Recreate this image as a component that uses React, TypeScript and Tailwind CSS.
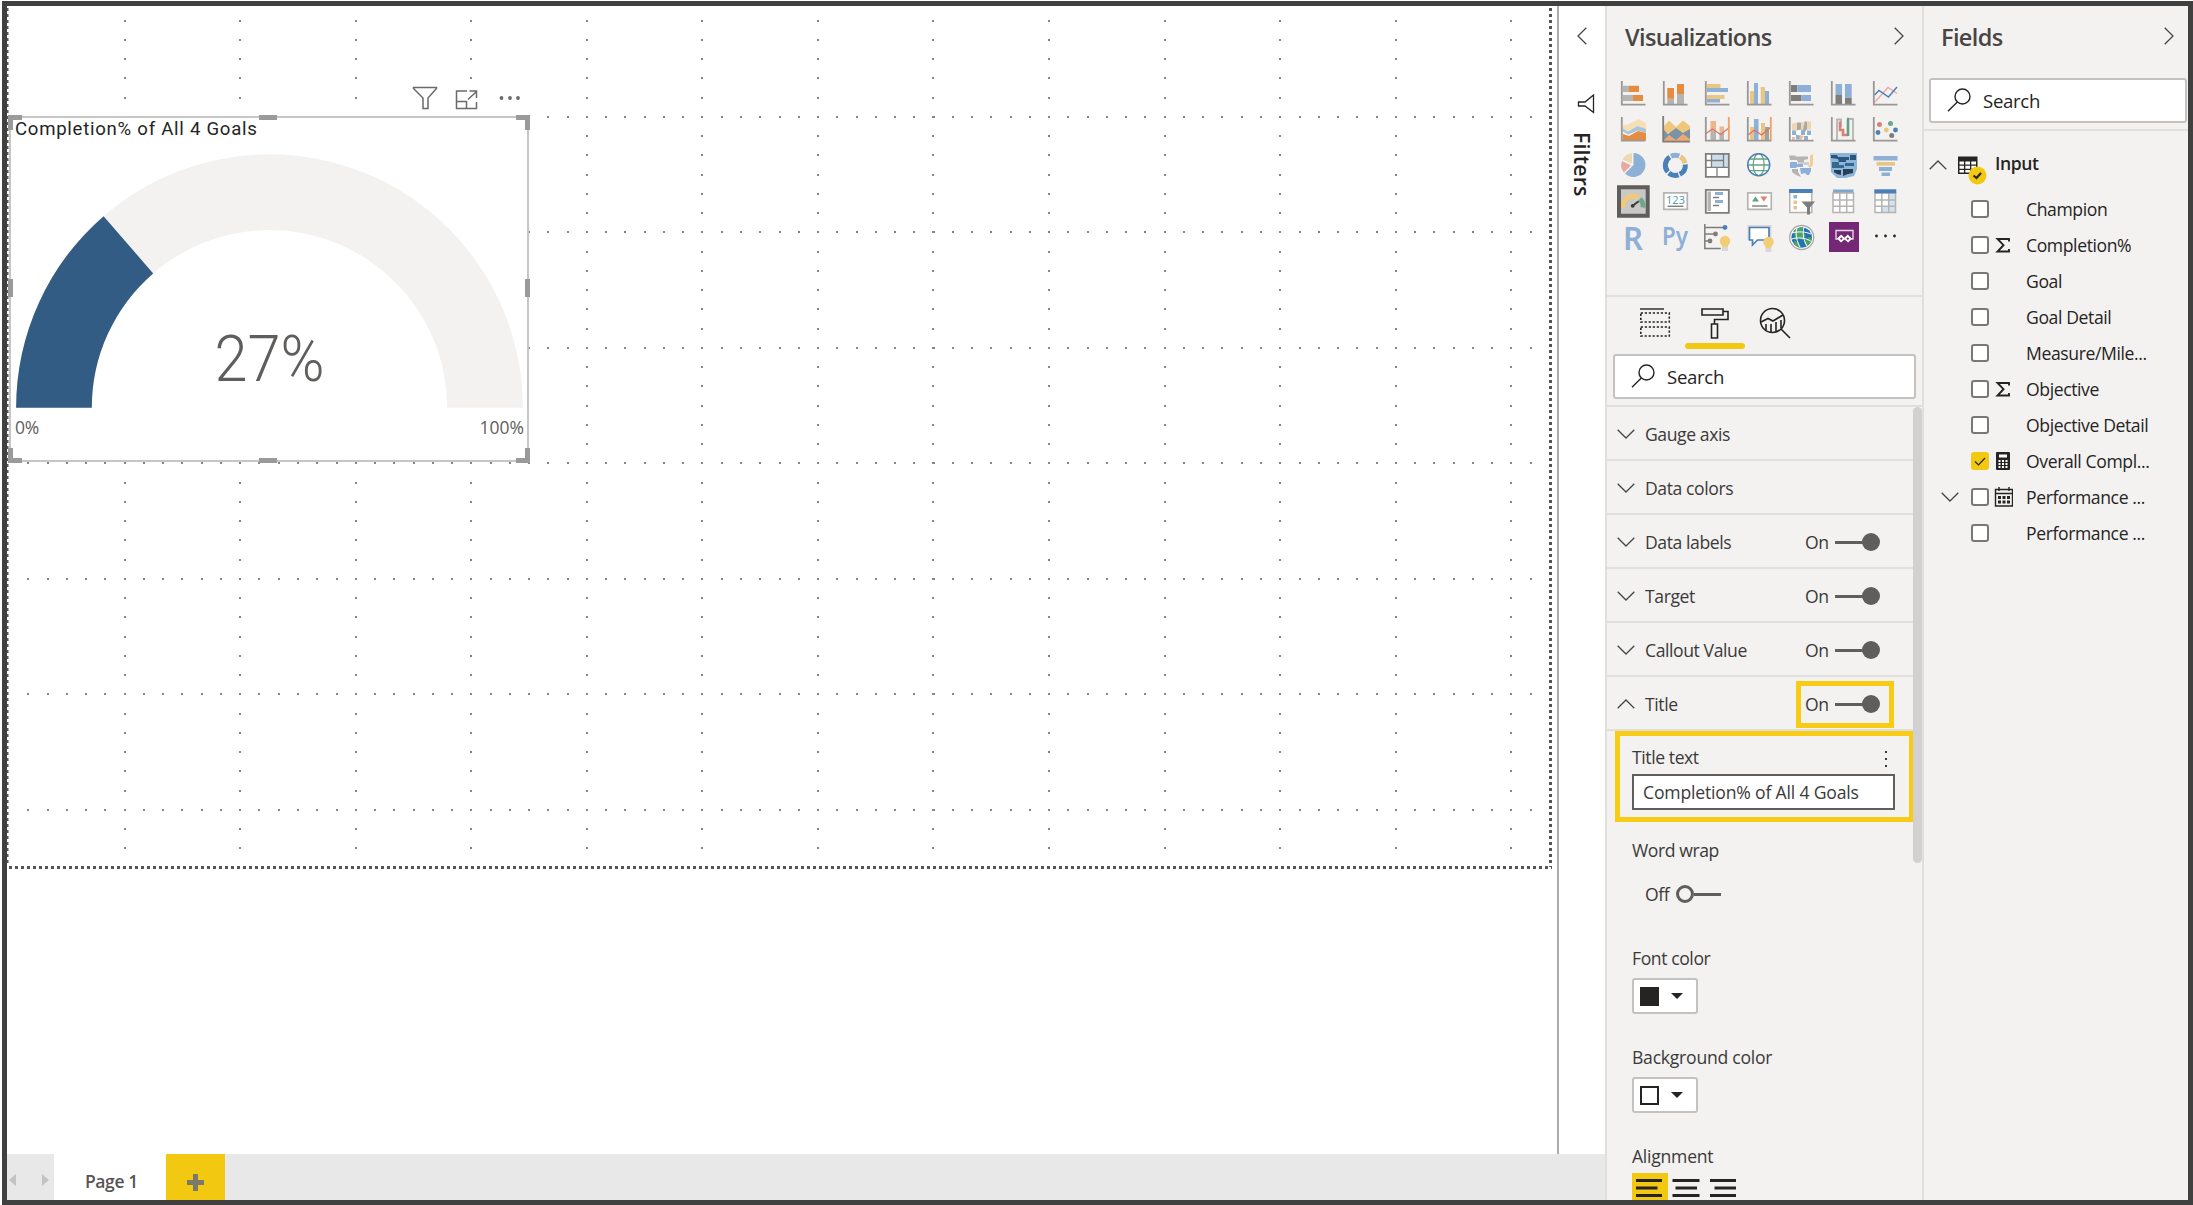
import type { ReactNode } from 'react';

const AXIS = '#999896';
const BLUE = '#8fb0d6';
const DEEP = '#4a80b8';
const SAND = '#e8c684';
const ORANGE = '#e58c41';
const GREY = '#b5b4b2';
const DARK = '#7e7d7b';

const Axis = () => <path d="M9.8 6V29.6H33.5" fill="none" stroke={AXIS} strokeWidth="1.8" />;

const Bulb = ({ x, y }: { x: number; y: number }) => (
  <g transform={`translate(${x} ${y})`}>
    <path d="M-3 3h6v7h-6z" fill="#d9d8d6" />
    <circle r="5.2" fill="#f2cd74" />
    <path d="M-2.6 3h5.2v3h-5.2z" fill="#f2cd74" />
  </g>
);

// Every icon is drawn in a 42 x 36 cell
const visuals: { name: string; art: ReactNode }[] = [
  {
    name: 'Stacked bar chart',
    art: <>
      <path d="M11 10.7h6V17h-6zM11 20h10v6H11z" fill={GREY} />
      <path d="M17 10.7h10V17H17zM21 20h10v6H21z" fill={ORANGE} />
      <Axis />
    </>,
  },
  {
    name: 'Stacked column chart',
    art: <>
      <path d="M13.3 23.7H20V29h-6.7zM23 19h7v10h-7z" fill={GREY} />
      <path d="M13.3 13H20v10.7h-6.7zM23 9h7v10h-7z" fill={ORANGE} />
      <Axis />
    </>,
  },
  {
    name: 'Clustered bar chart',
    art: <>
      <path d="M11 9h13.5v4H11zM11 20h17.5v4H11z" fill={SAND} />
      <path d="M11 13h21v4H11zM11 24h13v3.5H11z" fill={BLUE} />
      <Axis />
    </>,
  },
  {
    name: 'Clustered column chart',
    art: <>
      <path d="M12 16h4v13h-4zM22.7 12H27v17h-4.3z" fill={SAND} />
      <path d="M16 8h4v21h-4zM27 16h4v13h-4z" fill={BLUE} />
      <Axis />
    </>,
  },
  {
    name: '100% Stacked bar chart',
    art: <>
      <path d="M11 10h6.3v7H11zM11 20h10.5v6H11z" fill={DARK} />
      <path d="M17.3 10H31v7H17.3zM21.5 20H31v6h-9.5z" fill={BLUE} />
      <Axis />
    </>,
  },
  {
    name: '100% Stacked column chart',
    art: <>
      <path d="M13.5 9H20v11h-6.5zM23 9h6.7v13.7H23z" fill={BLUE} />
      <path d="M13.5 20H20v9h-6.5zM23 22.7h6.7V29H23z" fill={DARK} />
      <Axis />
    </>,
  },
  {
    name: 'Line chart',
    art: <>
      <path d="M11 27 24 12.5l9 6" fill="none" stroke="#f0a9a4" strokeWidth="1.4" />
      <path d="M10.5 20l4.5-4.5 9.5 6.5L33 12" fill="none" stroke={DEEP} strokeWidth="1.5" />
      <Axis />
    </>,
  },
  {
    name: 'Area chart',
    art: <>
      <path d="M11 14l5-.5L26.5 8l7.5 4v7l-8-4-10 5-5-2z" fill="#f6dfb8" />
      <path d="M11 17.5l5 3L25.5 15l8.500 3v4l-8-2.500-10 4-5-3z" fill="#a9c4d4" />
      <path d="M11 23l6 2 9-5 8 2v7.500H11z" fill={ORANGE} />
      <Axis />
    </>,
  },
  {
    name: 'Stacked area chart',
    art: <>
      <path d="M9 16l6-6.500 7 6.500 7-6.500 7 5.500V22H9z" fill="#f0c67c" />
      <path d="M9 18l5 5 8-6 7 5 7-4v12H9z" fill="#7a93a6" />
      <path d="M9 30l6-6 7 5 7-6 7 5v2z" fill="#eda973" />
      <path d="M9.200 5v25.700H36" fill="none" stroke={DARK} strokeWidth="1.8" />
    </>,
  },
  {
    name: 'Line and stacked column chart',
    art: <>
      <path d="M14.500 10H20v10h-5.500zM23.500 15.500H28v6h-4.500z" fill="#edb78b" />
      <path d="M14.500 20H20v9h-5.500zM23.500 21.500H28V29h-4.500z" fill={GREY} />
      <path d="M10 22.500l6.500-4.500 8 5.500 9-7" fill="none" stroke="#dd6f5f" strokeWidth="1.2" />
      <path d="M32.800 6v23" stroke="#eda16b" strokeWidth="1.8" />
      <Axis />
    </>,
  },
  {
    name: 'Line and clustered column chart',
    art: <>
      <path d="M12 16h4v13h-4zM23 12h4v17h-4z" fill={SAND} />
      <path d="M16 8h4.500v21H16z" fill={BLUE} />
      <path d="M27 16h4v13h-4z" fill={DARK} opacity=".7" />
      <path d="M10 24l6.500-5 7 5 9.500-8" fill="none" stroke="#dd6f5f" strokeWidth="1.2" />
      <path d="M32.800 6v23" stroke="#eda16b" strokeWidth="1.8" />
      <Axis />
    </>,
  },
  {
    name: 'Ribbon chart',
    art: <>
      <path d="M11 19h20v10H11z" fill="#fff" />
      <path d="M12 12.500l5-1v8h-5zM21 11.500l5-1.500v8l-5 1zM27 10.500h4v8h-4z" fill="#edd6b2" />
      <path d="M17 11.500l4 0v7l-4 1zM25 10.500l2 0v8l-4 5v-5z" fill="#aaa9a7" />
      <path d="M12 19.500h4v4.500h-4zM16 23.500l4 1v4h-4zM21 18.500l4 1v4.500h-4zM27 19.500h4V24h-4zM24 25h4v4h-4z" fill={BLUE} />
      <path d="M12 26h3v3h-3zM20 24l4 1-3 4h-2z" fill="#e9bf9a" />
      <Axis />
    </>,
  },
  {
    name: 'Waterfall chart',
    art: <>
      <path d="M15 29.500V8.500h4V16" fill="none" stroke={GREY} strokeWidth="1.8" />
      <path d="M18 10.500v8.500h3v5h5" fill="none" stroke="#dc7f75" strokeWidth="2.6" />
      <path d="M26 25V8h-1" fill="none" stroke="#62a086" strokeWidth="2.6" />
      <path d="M27 8h4v21.500" fill="none" stroke={GREY} strokeWidth="1.8" />
      <Axis />
    </>,
  },
  {
    name: 'Scatter chart',
    art: <>
      <circle cx="15.5" cy="13.5" r="2.5" fill="#dc7f75" />
      <circle cx="26.5" cy="12.5" r="2.5" fill="#6ba58c" />
      <circle cx="14" cy="21.5" r="2.4" fill={DEEP} />
      <circle cx="22.3" cy="19" r="2.4" fill={SAND} />
      <circle cx="31.5" cy="19" r="2.4" fill={DEEP} />
      <circle cx="27.7" cy="24.5" r="2.5" fill={DARK} />
      <Axis />
    </>,
  },
  {
    name: 'Pie chart',
    art: <>
      <path d="M21.500 18V6a12 12 0 1 1-8.500 20.500z" fill={BLUE} />
      <path d="M20 16.500V6.200a12 12 0 0 0-9.500 6.300z" fill="#eed9b3" />
      <path d="M19 18.500l-9-4.500a11 11 0 0 0 2 11.500z" fill="#eaa9a0" />
    </>,
  },
  {
    name: 'Donut chart',
    art: (
      <g fill="none" strokeWidth="5" transform="translate(21.3 18.3)">
        <path d="M-4.300-9.100A10 10 0 0 1 3.900-9.200" stroke={BLUE} />
        <path d="M5-8.700A10 10 0 0 1 9.700-2" stroke={SAND} />
        <path d="M10-.8A10 10 0 0 1 4.500 9" stroke={DEEP} />
        <path d="M3.300 9.500A10 10 0 0 1-6.500 7.700" stroke={DEEP} />
        <path d="M-7.500 6.600A10 10 0 0 1-5.500-8.300" stroke={DEEP} />
      </g>
    ),
  },
  {
    name: 'Treemap',
    art: <>
      <path d="M9.800 6.800h23v23h-23z" fill="#fff" />
      <path d="M16 7h17v13H16z" fill="#cddcec" />
      <path d="M15.500 7v13M27.500 7v13M9.800 20.300h23M15.500 13.500h12M21 20.300v9.500M9.800 13.500h5.700" stroke={DARK} strokeWidth="1.3" fill="none" />
      <path d="M9.800 6.800h23v23h-23z" fill="none" stroke={DARK} strokeWidth="1.8" />
    </>,
  },
  {
    name: 'Map',
    art: <>
      <circle cx="20.7" cy="17.7" r="11" fill="#fff" />
      <path d="M12 12h17.500M10 18h21.500M12 23.700h17.500" stroke="#67a37f" strokeWidth="1.3" />
      <ellipse cx="20.7" cy="17.7" rx="5.5" ry="11" fill="none" stroke="#67a37f" strokeWidth="1.3" />
      <circle cx="20.7" cy="17.7" r="11" fill="none" stroke={DEEP} strokeWidth="1.5" />
    </>,
  },
  {
    name: 'Filled map',
    art: <>
      <path d="M9 8.500h6l1 1h12V12l-4 1v2h-6l-1-2H10z" fill={GREY} />
      <path d="M30 8.500l3-1.500v11l-3 3-2-2 2-2z" fill="#efcf95" />
      <path d="M10 15h7v2h6v3h-6l-1 1h-6z" fill={BLUE} />
      <path d="M18 15h11v3h-5v-1h-6z" fill="#cfcecc" />
      <path d="M12 22h6v3l3 5-5-2-4-3z" fill={GREY} />
      <path d="M20 21h11v3l-2 4h-2l-2-2-4 1z" fill={BLUE} />
    </>,
  },
  {
    name: 'Shape map',
    art: <>
      <path d="M8 6h27v16l-3 7-4 1-4 1h-9l-6-6z" fill="#8db5d9" />
      <path d="M9 8h6l1 2h11v3h-3v2h-7l-1-3-7-1zM28 8h6v5h-6z" fill="#2d567f" />
      <path d="M10 15h7v3h5v3H10zM23 16h9v3h-9z" fill="#35688f" />
      <path d="M12 23h7v5l-4-1-3-2zM21 22h10v4l-5 1-5 2z" fill="#283f59" />
    </>,
  },
  {
    name: 'Funnel',
    art: <>
      <path d="M9.500 9h24v4.500h-24zM15 20h13v4H15z" fill={BLUE} />
      <path d="M12.500 15h18.500v3.700H12.500z" fill={SAND} />
      <path d="M17.500 25.500H26V29h-8.500z" fill={BLUE} />
    </>,
  },
  {
    name: 'Gauge',
    art: <>
      <path d="M7 4.300h28.700v28.500H7z" fill="#c8c8c6" stroke="#5f5e5c" strokeWidth="4" />
      <path d="M11.500 24.500A9.800 9.800 0 0 1 26.300 14.600" fill="none" stroke="#f2c879" strokeWidth="4.8" />
      <path d="M28 16A9.800 9.800 0 0 1 30.900 24.500" fill="none" stroke="#6fa68b" strokeWidth="4.8" />
      <path d="M20.700 22.800l6-4.600" stroke="#3b3a39" strokeWidth="1.8" />
      <circle cx="20.7" cy="22.8" r="1.9" fill="#3b3a39" />
    </>,
  },
  {
    name: 'Card',
    art: <>
      <path d="M9.800 9.800h23.500v16.500H9.800z" fill="#fff" stroke={GREY} strokeWidth="1.7" />
      <text x="21.5" y="20.5" textAnchor="middle" fontSize="11" fill="#5f9db0" fontFamily="Noto Sans">123</text>
      <path d="M13.500 23.300h16" stroke={DARK} strokeWidth="1.4" />
    </>,
  },
  {
    name: 'Multi-row card',
    art: <>
      <path d="M9.800 6.800h23v23h-23z" fill="#fff" stroke={DARK} strokeWidth="1.8" />
      <path d="M11.500 8.500H15v19.500h-3.500z" fill={GREY} />
      <path d="M19 9h8v3h-8zM19 17h8v3h-8z" fill={BLUE} />
      <path d="M17 14.500h6M17 22.500h6" stroke={DARK} strokeWidth="1.3" />
    </>,
  },
  {
    name: 'KPI',
    art: <>
      <path d="M9.800 9.800h23.500v16.500H9.800z" fill="#fff" stroke={GREY} strokeWidth="1.7" />
      <path d="M14 18.500l3.500-5 3.500 5z" fill="#5ea286" />
      <path d="M22.300 13.500h7l-3.500 5z" fill="#dc7f75" />
      <path d="M14 23h15.500" stroke={DARK} strokeWidth="1.4" />
    </>,
  },
  {
    name: 'Slicer',
    art: <>
      <path d="M9.800 7h22v22.500h-22z" fill="#fff" stroke={GREY} strokeWidth="1.5" />
      <path d="M9 6h23.500v4H9z" fill={DEEP} />
      <path d="M13.500 12h3.500v3.500h-3.500z" fill={BLUE} />
      <path d="M13.500 17.500h3.500V21h-3.500z" fill={SAND} />
      <path d="M13.500 23h3.500v3.500h-3.500z" fill="#e9bf9a" />
      <path d="M21.500 18.500h13.500l-5 6v7h-3v-7z" fill={DARK} />
    </>,
  },
  {
    name: 'Table',
    art: <>
      <path d="M11 7h20.500v22.500H11z" fill="#fff" />
      <path d="M11 6.500h20.500V10H11z" fill="#7da6cc" />
      <path d="M11 17h20.500M11 23.300h20.500M17.800 10v19.500M24.700 10v19.500M11 10h20.500v19.500H11z" fill="none" stroke={GREY} strokeWidth="1.5" />
    </>,
  },
  {
    name: 'Matrix',
    art: <>
      <path d="M11 7h20.500v22.500H11z" fill="#fff" />
      <path d="M24.700 10h7v19.500h-14V23h7z" fill="#d3e2f1" />
      <path d="M11 17h20.500M11 23.300h20.500M17.800 10v19.500M24.700 10v19.500M11 10h20.500v19.500H11z" fill="none" stroke={GREY} strokeWidth="1.5" />
      <path d="M10.300 6.300h22v4h-22z" fill={DEEP} />
    </>,
  },
  {
    name: 'R script visual',
    art: <text x="11" y="30.5" fontSize="32" fontWeight="600" fill={BLUE} fontFamily="Noto Sans" textLength="20" lengthAdjust="spacingAndGlyphs">R</text>,
  },
  {
    name: 'Python visual',
    art: <text x="8" y="25.5" fontSize="25" fontWeight="600" fill={BLUE} fontFamily="Noto Sans" textLength="26" lengthAdjust="spacingAndGlyphs">Py</text>,
  },
  {
    name: 'Key influencers',
    art: <>
      <path d="M8.800 5v24.500h16M9 8.500h19.500M9 15h11M9 22h5" fill="none" stroke={DARK} strokeWidth="1.5" />
      <circle cx="29" cy="8.5" r="2.4" fill={DEEP} />
      <circle cx="19.5" cy="15" r="2.4" fill={DARK} />
      <circle cx="14" cy="22" r="2.4" fill={DARK} />
      <Bulb x={29} y={22} />
    </>,
  },
  {
    name: 'Q&A',
    art: <>
      <path d="M9.500 6h24v15h-24z" fill="#d9d8d6" />
      <path d="M11.500 8.500H31v12.500H19.500l-5 5v-5h-3z" fill="#fff" stroke={DEEP} strokeWidth="1.7" />
      <Bulb x={30.5} y={23} />
    </>,
  },
  {
    name: 'ArcGIS Maps',
    art: <>
      <circle cx="21.7" cy="18.5" r="12" fill="#fff" stroke="#a9a8a6" strokeWidth="1.3" />
      <circle cx="21.7" cy="18.5" r="10.3" fill="#2272b5" />
      <path d="M14 12c3-3 7-4 10-4l-3 5 5 3-3 5-5-2-3 2zM24 23l5-5 3 1c0 4-3 7-6 8.500zM14 22l5 1 1 5.500c-3 0-6-3-6-6.500z" fill="#4aa564" />
      <path d="M12 14c7-2 14-1 19 1M11.700 20c7-2 14-1 19 2M17 9c-2 7 0 14 3 19M24 8c-2 7 0 14 3 19" fill="none" stroke="#fff" strokeWidth="1" />
    </>,
  },
  {
    name: 'Power Apps',
    art: <>
      <path d="M7 3h30v30H7z" fill="#742774" />
      <path d="M16.500 20h-2.500v-8.500h17V20h-2.500" fill="none" stroke="#e8d5e8" strokeWidth="1.4" />
      <path d="M19.300 15.500l3.200 3.200 3.200-3.200 4.300 4.300-3.800 3.800-3.700-3.200-3.500 3.200-4-4z" fill="#fff" />
      <path d="M19.300 18.300l1.400 1.400-1.400 1.400-1.400-1.400zM25.800 18.300l1.400 1.400-1.400 1.400-1.400-1.400z" fill="#742774" />
    </>,
  },
  {
    name: 'Get more visuals',
    art: <>
      <circle cx="12.5" cy="17" r="1.4" fill="#252423" />
      <circle cx="21.5" cy="17" r="1.4" fill="#252423" />
      <circle cx="30.5" cy="17" r="1.4" fill="#252423" />
    </>,
  },
];

const sections = [
  { label: 'Gauge axis', toggle: false, open: false },
  { label: 'Data colors', toggle: false, open: false },
  { label: 'Data labels', toggle: true, open: false },
  { label: 'Target', toggle: true, open: false },
  { label: 'Callout Value', toggle: true, open: false },
  { label: 'Title', toggle: true, open: true },
];

const fields = [
  { label: 'Champion' },
  { label: 'Completion%', icon: 'sum' },
  { label: 'Goal' },
  { label: 'Goal Detail' },
  { label: 'Measure/Mile...' },
  { label: 'Objective', icon: 'sum' },
  { label: 'Objective Detail' },
  { label: 'Overall Compl...', icon: 'calc', checked: true },
  { label: 'Performance ...', icon: 'date', expand: true },
  { label: 'Performance ...' },
];

function Chevron({ dir }: { dir: 'up' | 'down' | 'left' | 'right' }) {
  const paths = {
    up: 'M.7 9.3 9 1l8.3 8.3',
    down: 'M.7.7 9 9 17.3.7',
    left: 'M9.3.7 1 9l8.3 8.3',
    right: 'M.7.7 9 9 .7 17.3',
  };
  const vertical = dir === 'up' || dir === 'down';
  return (
    <svg width={vertical ? 18 : 10} height={vertical ? 10 : 18} className="shrink-0" fill="none" stroke="#484644" strokeWidth="1.3">
      <path d={paths[dir]} />
    </svg>
  );
}

function SearchBox({ className }: { className: string }) {
  return (
    <div className={`flex h-[45px] items-center rounded-[3px] border-2 border-[#c3c2c0] bg-white pl-4 ${className}`}>
      <svg width="24" height="24" fill="none" stroke="#252423" strokeWidth="1.4" className="mb-0.5">
        <circle cx="15.5" cy="8.5" r="7.5" />
        <path d="M10.3 14 1 23.3" />
      </svg>
      <span className="ml-3 text-[18.6px] tracking-[-0.3px] text-[#252423]">Search</span>
    </div>
  );
}

function Toggle() {
  return (
    <div className="flex items-center">
      <span className="w-[30px] tracking-[-0.5px]">On</span>
      <svg width="28" height="20">
        <path d="M0 10.500h28" stroke="#605e5c" strokeWidth="3" />
      </svg>
      <span className="-ml-px h-[18px] w-[18px] rounded-full bg-[#605e5c]" />
    </div>
  );
}

function ColorPicker({ swatch }: { swatch: string }) {
  return (
    <div className="flex h-9 w-[66px] items-center rounded-[3px] border-2 border-[#c3c2c0] bg-white pl-1.5">
      <span className={`h-[19px] w-[19px] border-2 border-[#252423] ${swatch}`} />
      <svg width="12" height="6" className="ml-3" fill="#252423">
        <path d="M0 0h12L6 6z" />
      </svg>
    </div>
  );
}

function Canvas() {
  const cols = Array.from({ length: 13 }, (_, i) => 117.6 + i * 115.55);
  const rows = Array.from({ length: 7 }, (_, i) => 110.7 + i * 115.5);
  const step = 19.25;
  const dots: [number, number][] = [];
  cols.forEach(x => {
    for (let n = 0; n < 44; n++) dots.push([x, 14.7 + n * step]);
  });
  rows.forEach(y => {
    for (let n = 1; n < 80; n++) dots.push([2.1 + n * 19.26, y]);
  });
  return (
    <svg width="1550" height="1148" className="block">
      {dots.map(([x, y], i) => (
        <rect key={i} x={Math.round(x) - 1} y={Math.round(y) - 1} width="2" height="2" fill="#85868a" />
      ))}
      <path d="M.5 2V860" stroke="#555" strokeWidth="2" strokeDasharray="3 3" />
      <path d="M1543.500 2V861" stroke="#555" strokeWidth="3" strokeDasharray="3 3" />
      <path d="M2 861.500H1545" stroke="#555" strokeWidth="3" strokeDasharray="3 3" />
    </svg>
  );
}

// Selected gauge with its header icons and resize handles
function GaugeVisual() {
  return (
    <div className="absolute left-0.5 top-[76px] w-[522px]">
      <div className="flex h-[34px] items-start justify-end pr-[11px] pt-1">
        <svg width="26" height="24" fill="none" stroke="#6b6a68" strokeWidth="1.5" className="bg-white">
          <path d="M1.500 1.500h23v1L16 12v10.500h-5V12L1.500 2.500z" />
        </svg>
        <svg width="23" height="24" fill="none" stroke="#6b6a68" strokeWidth="1.5" className="ml-[17px] bg-white">
          <path d="M12 5H1.500v17.500h20V16M1.500 15.500h10v7M13 13.500 21 6M14.500 5h7v7" />
        </svg>
        <svg width="22" height="24" fill="#6b6a68" className="ml-5 bg-white">
          <circle cx="3.5" cy="12" r="1.9" />
          <circle cx="12" cy="12" r="1.9" />
          <circle cx="20" cy="12" r="1.9" />
        </svg>
      </div>
      <div className="relative h-[346px] w-[520px] border-2 border-[#c6c6c5] bg-white">
        <div className="h-8 pl-1 pt-px font-[Roboto] text-[18.6px] leading-5 tracking-[0.73px] text-[#252423]">Completion% of All 4 Goals</div>
        <svg width="516" height="262" className="block">
          <path d="M5.100 257.700A253.400 253.400 0 0 1 511.900 257.700H436.200A177.700 177.700 0 0 0 80.800 257.700z" fill="#f3f2f1" />
          <path d="M5.100 257.700A253.400 253.400 0 0 1 92.600 66.200L142.200 123.400A177.700 177.700 0 0 0 80.800 257.700z" fill="#325c83" />
          <text x="258.5" y="231" textAnchor="middle" fontFamily="Roboto" fontWeight="300" fontSize="65" fill="#605e5c" textLength="110" lengthAdjust="spacingAndGlyphs">27%</text>
        </svg>
        <div className="flex justify-between pl-1 pr-[3px] pt-[3px] text-[17.5px] leading-6 text-[#605e5c]">
          <span className="tracking-[-0.3px]">0%</span>
          <span>100%</span>
        </div>
        <svg width="522" height="348" className="absolute -left-[3px] -top-[3px]" fill="#9a9a9a">
          <path d="M0 0h14v5H5v10H0zM251 0h18v5h-18zM508 0h14v15h-5V5h-9zM0 164h5v18H0zM517 164h5v18h-5zM0 333h5v10h9v5H0zM251 343h18v5h-18zM517 333h5v15h-14v-5h9z" />
        </svg>
      </div>
    </div>
  );
}

function PageTabs() {
  return (
    <div className="flex h-[46px] bg-[#e9e8e8]">
      <div className="flex w-[47px] items-center justify-between pl-0.5 pr-[5px] pt-1.5">
        <svg width="7" height="12" fill="#c4c3c2"><path d="M7 0v12L0 6z" /></svg>
        <svg width="7" height="12" fill="#c4c3c2"><path d="M0 0v12l7-6z" /></svg>
      </div>
      <div className="w-28 bg-white pl-[31px] pt-[15px] text-[17.5px] font-semibold leading-6 tracking-[-0.4px] text-[#575553]">Page 1</div>
      <div className="flex w-[59px] justify-center bg-[#f2c811] pt-5">
        <svg width="17" height="17" fill="none" stroke="#7b796c" strokeWidth="5"><path d="M8.500 0v17M0 8.500h17" /></svg>
      </div>
    </div>
  );
}

function FiltersPane() {
  return (
    <div className="flex w-12 flex-col items-center border-l-2 border-[#aeadac] bg-white">
      <div className="mt-[21px]"><Chevron dir="left" /></div>
      <svg width="18" height="20" fill="none" stroke="#252423" strokeWidth="1.3" className="ml-[7px] mt-[49px]">
        <path d="M16.500 1v17.500L8 12H1.500V8H8z" />
      </svg>
      <div className="mt-[18px] text-[21.2px] font-semibold leading-6 tracking-[0.2px] text-[#252423] [writing-mode:vertical-rl]">Filters</div>
    </div>
  );
}

function VisualizationsPane() {
  return (
    <div className="flex w-[317px] flex-col overflow-hidden border-l-2 border-[#e1dfdd] bg-[#f3f2f1]">
      <div className="flex h-[69px] items-start justify-between pl-[18px] pr-[18px] pt-[21px]">
        <h2 className="-mt-1.5 text-[23.5px] font-semibold leading-8 tracking-[-0.65px] text-[#484644]">Visualizations</h2>
        <Chevron dir="right" />
      </div>
      <div className="grid grid-cols-[repeat(7,42px)] pl-[5px]">
        {visuals.map(v => (
          <svg key={v.name} width="42" height="36" viewBox="0 0 42 36" aria-label={v.name} className="overflow-visible">{v.art}</svg>
        ))}
      </div>

      {/* Pane tabs */}
      <div className="mt-10 flex h-[59px] border-t-2 border-[#e1dfdd] pt-2.5">
        <div className="flex w-[78px] justify-end pr-3.5">
          <svg width="32" height="34" fill="none" stroke="#252423" strokeWidth="1.6">
            <path d="M1 2h24" strokeWidth="1.4" />
            <path d="M1.800 6h28.500v9H1.800zM1.800 20h28.500v9H1.800z" strokeDasharray="2.2 1.8" />
          </svg>
        </div>
        <div className="flex w-[60px] flex-col items-center">
          <svg width="28" height="34" fill="none" stroke="#252423" strokeWidth="1.6">
            <path d="M1 2h21v6H1zM22 4.500h5v8H13.500V17M10.500 17h6v14h-6z" />
          </svg>
          <div className="mt-0.5 h-1.5 w-[60px] shrink-0 rounded-full bg-[#f2c811]" />
        </div>
        <svg width="32" height="34" fill="none" stroke="#252423" strokeWidth="1.6" className="ml-3.5">
          <circle cx="13.5" cy="13.5" r="12" />
          <path d="M22 22l9 9M2 15l7-3.500 5 2.500L24 8M7 17v6M12 17v8M17 15v9.500M22 13v8" />
        </svg>
      </div>

      <SearchBox className="ml-1.5 w-[303px] shrink-0" />

      <div className="mt-1.5 flex text-[17.6px] tracking-[-0.42px] text-[#3b3a39]">
        <div className="w-[306px] shrink-0">
          {sections.map(s => (
            <div key={s.label} className="flex h-[54px] w-[315px] items-center border-t-2 border-[#e1dfdd] pl-2.5 pt-0.5">
              <Chevron dir={s.open ? 'up' : 'down'} />
              <span className="ml-2.5 w-[140px]">{s.label}</span>
              {s.toggle && (
                <div className={s.open ? 'ml-[11px] flex h-[47px] w-[98px] shrink-0 items-center border-[5px] border-[#f8cb14] pl-1' : 'ml-5'}>
                  <Toggle />
                </div>
              )}
            </div>
          ))}

          <div className="w-[315px] border-t-2 border-[#e1dfdd]">
            <div className="ml-2 h-[91px] w-[299px] border-[5px] border-[#f8cb14] pl-3 pr-3.5 pt-2">
              <div className="flex h-[30px] items-center justify-between pr-[7px]">
                <span className="mb-[3px]">Title text</span>
                <svg width="4" height="18" fill="#3b3a39"><path d="M1 1h2v2H1zM1 8h2v2H1zM1 15h2v2H1z" /></svg>
              </div>
              <div className="flex h-9 w-[263px] items-center border-2 border-[#605e5c] bg-white pl-[9px] pt-px tracking-[-0.18px]">Completion% of All 4 Goals</div>
            </div>
          </div>

          <div className="flex flex-col pl-[25px] leading-6">
            <span className="mt-4">Word wrap</span>
            <div className="mt-5 flex items-center pl-[13px]">
              <span className="w-[31px]">Off</span>
              <span className="h-[18px] w-[18px] rounded-full border-[3px] border-[#605e5c]" />
              <span className="mt-px h-[3px] w-[27px] bg-[#605e5c]" />
            </div>
            <span className="mb-2 mt-10">Font color</span>
            <ColorPicker swatch="bg-[#252423]" />
            <span className="mb-2 mt-[31px] tracking-[-0.25px]">Background color</span>
            <ColorPicker swatch="bg-white" />
            <span className="mb-[5px] mt-[31px] tracking-[-0.25px]">Alignment</span>
            <div className="flex">
              <svg width="36" height="27" stroke="#252423" strokeWidth="3" className="bg-[#f2c811]">
                <path d="M4 7.500h26M4 15h21.500M4 22.500h26" />
              </svg>
              <svg width="36" height="27" stroke="#252423" strokeWidth="3">
                <path d="M4.500 7.500h27M7.500 15h21.500M4.500 22.500h27" />
              </svg>
              <svg width="36" height="27" stroke="#252423" strokeWidth="3">
                <path d="M6 7.500h26M10.500 15h21.500M6 22.500h26" />
              </svg>
            </div>
          </div>
        </div>
        <div className="relative mt-0.5 h-[456px] w-[9px] rounded-full bg-[#d2d1cf]" />
      </div>
    </div>
  );
}

function FieldIcon({ kind }: { kind?: string }) {
  if (kind === 'sum') {
    return (
      <svg width="20" height="20" fill="none" stroke="#252423" strokeWidth="1.9">
        <path d="M16 6.500V4H4.500l6 6.200L4.500 16.500H16V14" />
      </svg>
    );
  }
  if (kind === 'calc') {
    return (
      <svg width="20" height="20">
        <rect x="3" y="1" width="14" height="18" rx="1" fill="#252423" />
        <path d="M6 3.500h8v3H6zM5.500 9h2v2h-2zM9 9h2v2H9zM12.500 9h2v2h-2zM5.500 12h2v2h-2zM9 12h2v2H9zM12.500 12h2v2h-2zM5.500 15h2v2h-2zM9 15h2v2H9zM12.500 15h2v2h-2z" fill="#fff" />
      </svg>
    );
  }
  if (kind === 'date') {
    return (
      <svg width="20" height="20" fill="none" stroke="#252423" strokeWidth="1.4">
        <path d="M2.500 2.500h17v16.500h-17zM2.500 6.500h17M6 0v4M16 0v4" />
        <path d="M5 9h3v3H5zM9.500 9h3v3h-3zM14 9h3v3h-3zM5 13.500h3v3H5zM9.500 13.500h3v3h-3zM14 13.500h3v3h-3z" fill="#252423" stroke="none" />
      </svg>
    );
  }
  return <span className="w-5" />;
}

function FieldsPane() {
  return (
    <div className="flex w-[266px] flex-col border-l-2 border-[#e1dfdd] bg-[#f3f2f1]">
      <div className="flex h-[72px] items-start justify-between pl-[17px] pr-3.5 pt-[21px]">
        <h2 className="-mt-1.5 text-[23.5px] font-semibold leading-8 tracking-[-0.6px] text-[#484644]">Fields</h2>
        <Chevron dir="right" />
      </div>
      <SearchBox className="ml-[5px] w-[258px] shrink-0" />
      <div className="mt-1.5 border-t-2 border-[#e1dfdd] pt-5 text-[17.6px] tracking-[-0.4px] text-[#252423]">
        <div className="flex h-10 items-start pl-[5px]">
          <div className="mt-[9px]"><Chevron dir="up" /></div>
          <svg width="30" height="30" className="ml-2.5 mt-1">
            <path d="M1 1.500h19.500V19H1z" fill="#252423" />
            <path d="M2.500 6.500H7v3H2.500zM8.300 6.500H13v3H8.300zM14.300 6.500H19v3h-4.700zM2.500 10.800H7v3H2.500zM8.300 10.800H13v3H8.300zM14.300 10.800H19v3h-4.700zM2.500 15H7v2.500H2.500zM8.300 15H13v2.500H8.300zM14.300 15H19v2.500h-4.700z" fill="#fff" />
            <circle cx="20.5" cy="20.5" r="9" fill="#f2c811" />
            <path d="M16.500 20.500l3 2.500 4.500-5" fill="none" stroke="#252423" strokeWidth="2.2" />
          </svg>
          <span className="ml-2 font-semibold leading-6">Input</span>
        </div>
        {fields.map((f, i) => (
          <div key={i} className="flex h-9 items-center">
            <div className="flex w-[47px] pl-[17px]">{f.expand && <Chevron dir="down" />}</div>
            {f.checked ? (
              <span className="flex h-[18px] w-[18px] items-center justify-center rounded-[3px] bg-[#f2c811]">
                <svg width="12" height="9" fill="none" stroke="#252423" strokeWidth="1.2"><path d="M1 4.500 4.500 8 11 1" /></svg>
              </span>
            ) : (
              <span className="h-[18px] w-[18px] rounded-[3px] border-2 border-[#7a7876] bg-white" />
            )}
            <div className="ml-1 flex w-[33px]"><FieldIcon kind={f.icon} /></div>
            <span className="pt-px">{f.label}</span>
          </div>
        ))}
      </div>
    </div>
  );
}

export default function App() {
  return (
    <div className="h-[1205px] w-[2193px] overflow-hidden whitespace-nowrap bg-white pl-0.5 pt-px font-['Open_Sans',sans-serif]">
      <div className="flex h-[1204px] w-[2191px] overflow-hidden border-[5px] border-[#404040]">
        <div className="flex w-[1598px] flex-col">
          <div className="flex h-[1148px]">
            <div className="relative w-[1550px] bg-white">
              <Canvas />
              <GaugeVisual />
            </div>
            <FiltersPane />
          </div>
          <PageTabs />
        </div>
        <VisualizationsPane />
        <FieldsPane />
      </div>
    </div>
  );
}
